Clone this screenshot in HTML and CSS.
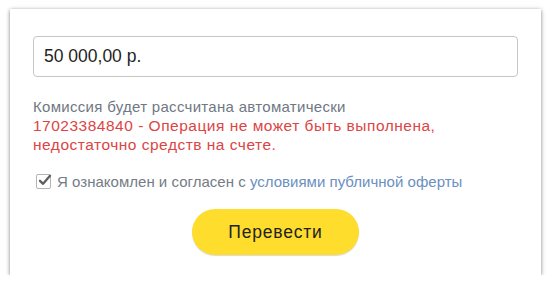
FILE: index.html
```html
<!DOCTYPE html>
<html lang="ru">
<head>
<meta charset="utf-8">
<link rel="stylesheet" href="styles.css">
</head>
<body>
<div class="card">
  <div class="field">50 000,00 р.</div>
  <div class="info">
    <div class="note">Комиссия будет рассчитана автоматически</div>
    <div class="error">17023384840 - Операция не может быть выполнена, недостаточно средств на счете.</div>
  </div>
  <label class="agree">
    <span class="box"><svg class="tick" width="15" height="15" viewBox="0 0 15 15"><path d="M3 7.8 L6.1 10.8 L13 2.8" fill="none" stroke="#5f5f5f" stroke-width="2.3" stroke-linecap="round" stroke-linejoin="round"/></svg></span>
    <span class="agree-text">Я ознакомлен и согласен с <span class="link">условиями публичной оферты</span></span>
  </label>
  <div class="actions"><button class="btn">Перевести</button></div>
</div>
</body>
</html>
```
FILE: styles.css
```css
html, body { margin: 0; padding: 0; background: #fff; }
body { font-family: "Liberation Sans", Arial, sans-serif; }
.card {
  margin: 9px 0 0 10px;
  width: 531px;
  height: 266px;
  box-sizing: border-box;
  padding: 27px 23px 0 23px;
  background: #fff;
  box-shadow: 0 1px 4px rgba(0,0,0,0.5);
}
.field {
  height: 41px;
  box-sizing: border-box;
  border: 1px solid #c6c6c6;
  border-radius: 4px;
  padding: 0 10px;
  display: flex;
  align-items: center;
  font-size: 17.5px;
  color: #1f1f1f;
}
.info { margin-top: 20px; line-height: 19px; }
.note { color: #6f7884; font-size: 15px; letter-spacing: 0.3px; }
.error { color: #dd4444; font-size: 15.5px; letter-spacing: 0.5px; width: 420px; }
.agree {
  display: flex;
  align-items: center;
  margin-top: 18px;
  font-size: 15px;
  line-height: 19px;
  letter-spacing: 0.02px;
  color: #747c86;
  gap: 6px;
  padding-left: 3px;
}
.box {
  position: relative;
  width: 15px; height: 15px;
  border: 1px solid #b4b4b4;
  border-radius: 2px;
  box-sizing: border-box;
  flex: none;
}
.tick { position: absolute; left: 0; top: -2px; }
.link { color: #6b8fbf; }
.actions { display: flex; justify-content: center; margin-top: 18px; }
.btn {
  width: 167px; height: 46px;
  border: none;
  border-radius: 23px;
  background: #ffdd2d;
  box-shadow: 0 1px 1px rgba(0,0,0,0.15);
  font-family: inherit;
  font-size: 17.5px;
  letter-spacing: 0.8px;
  color: #222;
  padding: 0;
}
```
